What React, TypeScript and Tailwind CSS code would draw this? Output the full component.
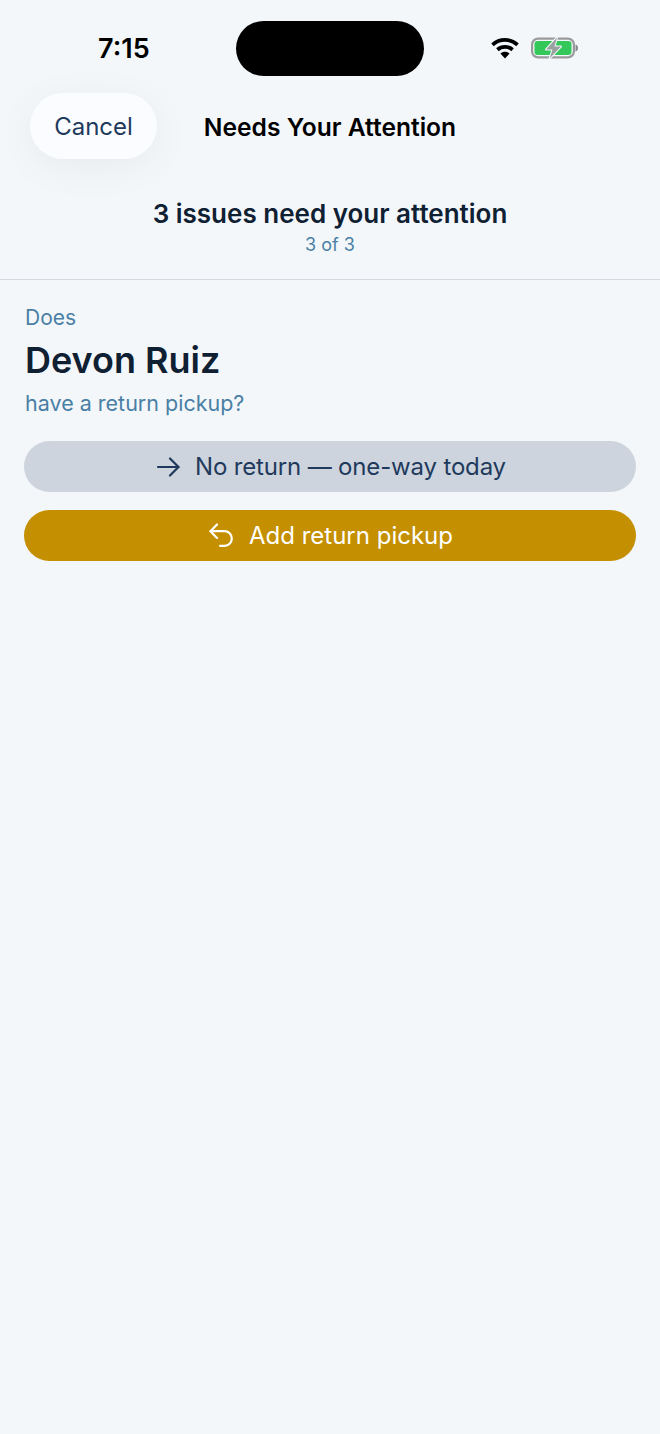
import React from 'react';

const WifiIcon = () => (
  <svg width="30" height="22" viewBox="0 0 30 22" fill="none">
    <path d="M2.500 7.800C9.600 1.300 20.400 1.300 27.500 7.800" stroke="#000" strokeWidth="3.800" />
    <path d="M7.400 12.700C11.800 8.900 18.200 8.900 22.600 12.700" stroke="#000" strokeWidth="3.800" />
    <path d="M10.400 16.500 15 21.500l4.600-5c-2.500-2.200-6.700-2.200-9.200 0Z" fill="#000" />
  </svg>
);

const BatteryIcon = () => (
  <svg width="48" height="24" viewBox="0 0 48 24" fill="none">
    <rect x="1.100" y="2.600" width="41.800" height="18.800" rx="6" stroke="#9a9a9a" strokeWidth="2.200" />
    <rect x="3.500" y="5" width="37" height="14" rx="3.200" fill="#34c759" />
    <path d="M44.500 8.500c1.700.3 2.500 1.800 2.500 3.500s-.8 3.200-2.500 3.500Z" fill="#8a8a8a" />
    <path
      d="M26 1.500 15 13.500h6.500L18.500 22.500 30 10.500h-6.500Z"
      fill="#9aa0a0"
      stroke="#f3f7fa"
      strokeWidth="2"
      strokeLinejoin="round"
      paintOrder="stroke"
    />
  </svg>
);

const ArrowIcon = () => (
  <svg width="26" height="22" viewBox="0 0 26 22" fill="none" stroke="currentColor" strokeWidth="2.200" strokeLinecap="round" strokeLinejoin="round">
    <path d="M4 11H24.500" />
    <path d="M16 2.500l8.500 8.500-8.500 8.500" />
  </svg>
);

const ReturnIcon = () => (
  <svg width="26" height="26" viewBox="0 0 26 26" fill="none" stroke="currentColor" strokeWidth="2.200" strokeLinecap="round" strokeLinejoin="round">
    <path d="M10 14.900 3.500 8.200 10 1.500" />
    <path d="M3.500 8.200h14a7.300 7.300 0 0 1 0 14.600H13" />
  </svg>
);

export default function App() {
  return (
    <div className="min-h-[1434px] w-[660px] bg-[#f3f7fa] font-['Inter','Liberation_Sans',sans-serif] text-[#0f2033]">
      {/* Status bar */}
      <div className="flex h-[93px] items-start pt-[21px] pl-[98px]">
        <span className="mt-[12px] w-[138px] shrink-0 text-[27px] leading-[32px] font-semibold text-black">7:15</span>
        <div className="h-[55px] w-[188px] shrink-0 rounded-full bg-black" />
        <div className="mt-[15px] ml-[66px] flex shrink-0 items-center gap-[11px]">
          <WifiIcon />
          <BatteryIcon />
        </div>
      </div>

      {/* Nav */}
      <div className="grid grid-cols-[1fr_auto_1fr] items-center px-[30px]">
        <div>
          <button className="h-[66px] w-[127px] rounded-full bg-[#fbfcff] pt-[2px] text-[24px] text-[#1f3a5c] shadow-[0_8px_40px_rgba(0,0,0,0.05)]">
            Cancel
          </button>
        </div>
        <h1 className="pt-[2px] text-[24.6px] font-semibold text-black">Needs Your Attention</h1>
        <div />
      </div>

      {/* Summary */}
      <div className="flex flex-col items-center border-b border-[#d3d9df] pt-[38px] pb-[20px]">
        <div className="text-[26px] leading-[34px] font-semibold text-[#0f2033]">3 issues need your attention</div>
        <div className="text-[18px] leading-[28px] text-[#4a7fa5]">3 of 3</div>
      </div>

      {/* Question */}
      <div className="px-[24px] pt-[24px]">
        <div className="pl-px">
          <div className="text-[21px] leading-[28px] text-[#4a7fa5]">Does</div>
          <div className="mt-[4px] text-[36px] leading-[48px] font-semibold text-[#0f2033]">Devon Ruiz</div>
          <div className="mt-[5px] text-[21.500px] leading-[28px] text-[#4a7fa5]">have a return pickup?</div>
        </div>

        <div className="mt-[24px] flex flex-col gap-[18px]">
          <button className="flex h-[51px] items-center justify-center gap-[15px] rounded-full bg-[#cdd4dd] text-[24px] tracking-[-0.16px] text-[#1f3a5c]">
            <ArrowIcon />
            No return — one-way today
          </button>
          <button className="flex h-[51px] items-center justify-center gap-[16px] rounded-full bg-[#c48f00] text-[24px] text-white">
            <ReturnIcon />
            Add return pickup
          </button>
        </div>
      </div>
    </div>
  );
}
